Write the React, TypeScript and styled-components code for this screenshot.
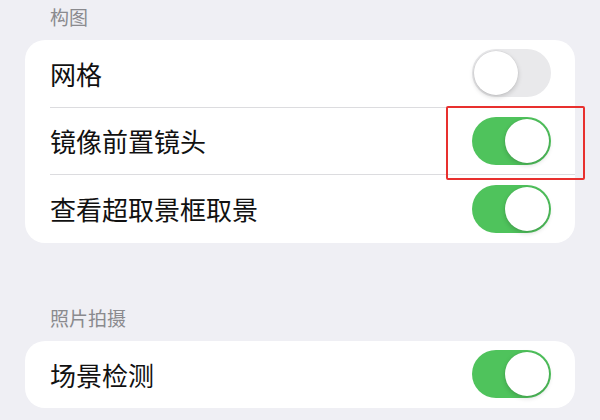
import React from 'react'
import styled, { createGlobalStyle } from 'styled-components'

const GlobalStyle = createGlobalStyle`
    html, body {
        margin: 0;
        padding: 0;
        background: #efeff4;
        font-family: "Noto Sans CJK SC", "Noto Sans", sans-serif;
    }
`

const Page = styled.div`
    width: 600px;
    height: 420px;
    overflow: hidden;
    background: #efeff4;
    padding: 5px 25px 0;
    box-sizing: border-box;
`

const SectionHeader = styled.div<{ $top?: number }>`
    margin-top: ${p => p.$top ?? 0}px;
    margin-bottom: 11px;
    padding-left: 25px;
    font-size: 19px;
    line-height: 24px;
    color: #8a8a8e;
`

const Card = styled.div`
    background: #ffffff;
    border-radius: 20px;
    overflow: visible;
`

const Row = styled.div<{ $last?: boolean }>`
    position: relative;
    margin-left: 25px;
    height: 67.5px;
    display: flex;
    align-items: center;
    justify-content: space-between;
    padding-right: 24px;
    border-bottom: ${p => (p.$last ? 'none' : '1px solid #dcdcdf')};
    box-sizing: border-box;
`

const Label = styled.span`
    font-size: 26px;
    color: #111;
    letter-spacing: 0;
`

const Track = styled.div<{ $on: boolean }>`
    width: 79px;
    height: 48px;
    border-radius: 24px;
    background: ${p => (p.$on ? '#4fc35c' : '#e9e9eb')};
    display: flex;
    align-items: center;
    justify-content: ${p => (p.$on ? 'flex-end' : 'flex-start')};
    padding: 2px;
    box-sizing: border-box;
`

const Knob = styled.div`
    width: 44px;
    height: 44px;
    border-radius: 50%;
    background: #ffffff;
    box-shadow: 0 2px 5px rgba(0, 0, 0, 0.18), 0 0 0 0.5px rgba(0, 0, 0, 0.06);
`

// red annotation box drawn over the mirrored-camera toggle
const Highlight = styled.div`
    position: absolute;
    left: 396px;
    top: -2px;
    width: 139px;
    height: 74px;
    border: 2px solid #e8302e;
    border-radius: 2px;
    box-sizing: border-box;
    pointer-events: none;
`

const Toggle = ({ on }: { on: boolean }) => (
    <Track $on={on}>
        <Knob />
    </Track>
)

type Item = { label: string, on: boolean, marked?: boolean }

const composition: Item[] = [
    { label: '网格', on: false },
    { label: '镜像前置镜头', on: true, marked: true },
    { label: '查看超取景框取景', on: true },
]

const photo: Item[] = [
    { label: '场景检测', on: true },
]

const Section = ({ items }: { items: Item[] }) => (
    <Card>
        {items.map((it, i) => (
            <Row key={it.label} $last={i === items.length - 1}>
                <Label>{it.label}</Label>
                <Toggle on={it.on} />
                {it.marked && <Highlight />}
            </Row>
        ))}
    </Card>
)

export default function App() {
    return (
        <Page>
            <GlobalStyle />
            <SectionHeader>构图</SectionHeader>
            <Section items={composition} />
            <SectionHeader $top={63}>照片拍摄</SectionHeader>
            <Section items={photo} />
        </Page>
    )
}
